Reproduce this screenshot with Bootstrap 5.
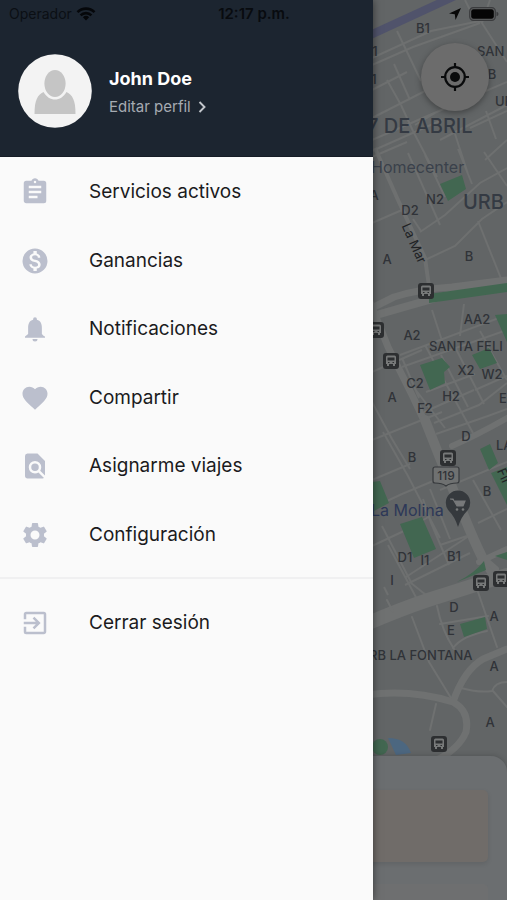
<!DOCTYPE html>
<html lang="es">
<head>
<meta charset="utf-8">
<meta name="viewport" content="width=device-width, initial-scale=1">
<title>Menú</title>
<link href="https://cdn.jsdelivr.net/npm/bootstrap@5.3.0/dist/css/bootstrap.min.css" rel="stylesheet">
<style>
  body { font-family: Inter, "Liberation Sans", sans-serif; background: #626566; }
  .status-strip { height: 28px; padding: 0 8px 0 9px; font-size: 14px; line-height: 28px; color: #080b0f; z-index: 5; }
  .status-strip .side { flex: 1 1 0; }
  .status-strip .carrier { color: #0b0f14; }
  .status-strip .clock { font-size: 15px; }
  .drawer { width: 73.5%; background: #fafafa; z-index: 3; box-shadow: 0 0 8px rgba(0,0,0,.5); }
  .drawer-head { background: #1c2530; padding: 54px 18px 28px; gap: 17px; border-bottom: 1px solid #151c25; }
  .avatar { width: 74px; height: 74px; }
  .user-name { font-size: 18px; line-height: 24px; color: #fff; font-weight: 700; }
  .edit-link { font-size: 15px; line-height: 24px; color: #a6abb2; gap: 6px; }
  .menu-rows { min-height: 411px; }
  .menu-link { color: #1b1b1d; font-size: 19px; line-height: 24px; padding: 2px 20px 0; gap: 39px; min-height: 68px; }
  .menu-link svg { width: 30px; height: 30px; fill: #bbbfcd; }
  .rule { height: 2px; background: #f0f0f1; margin: 9px 0; }
  .map-art text { fill: #303338; font-size: 13px; text-anchor: middle; font-weight: 500; }
  .map-art .from { text-anchor: start; }
  .map-art .district { font-size: 20px; fill: #343a43; }
  .map-art .place { font-size: 16px; font-weight: 400; fill: #3a414b; }
  .map-art .shop { fill: #2d3858; }
  .map-art .street { fill: #202225; font-weight: 400; }
  .map-art .route { font-size: 12px; }
  .locate { top: 43px; right: 18px; width: 68px; height: 68px; background: #6c6c6c; z-index: 2; box-shadow: 0 2px 6px rgba(0,0,0,.35); }
  .locate:hover { background: #727272; }
  .sheet { z-index: 1; background: #6b6e70; border-radius: 16px 16px 0 0; padding: 34px 19px 0; box-shadow: 0 -1px 5px rgba(0,0,0,.15); }
  .trip { height: 72px; background: #706c69; border-radius: 5px; box-shadow: 0 2px 5px rgba(0,0,0,.1); margin-bottom: 22px; }
  .trip-next { height: 16px; background: #6e6f70; border-radius: 5px 5px 0 0; }
</style>
<script src="https://cdn.jsdelivr.net/npm/bootstrap@5.3.0/dist/js/bootstrap.bundle.min.js"></script>
</head>
<body>
<div class="position-relative min-vh-100 overflow-hidden d-flex">

  <div class="status-strip position-absolute top-0 start-0 w-100 d-flex align-items-center">
    <div class="side d-flex align-items-center gap-1">
      <span class="carrier">Operador</span>
      <svg width="20" height="14" viewBox="0 0 20 14" aria-hidden="true"><g fill="none" stroke="#05070a" stroke-width="2.6"><path d="M1.5 5.2a12 12 0 0 1 17 0M4.6 8.4a7.6 7.6 0 0 1 10.8 0"/></g><path fill="#05070a" d="M6.9 10.3a4.5 4.5 0 0 1 6.2 0L10 13.6z"/></svg>
    </div>
    <span class="clock fw-semibold">12:17 p.m.</span>
    <div class="side d-flex align-items-center justify-content-end gap-2">
      <svg width="12" height="12" viewBox="0 0 11 11" aria-hidden="true"><path fill="#080808" d="M11 0 6 11 5.3 5.7 0 5z"/></svg>
      <svg width="30" height="14" viewBox="0 0 30 14" aria-hidden="true"><rect x=".7" y=".7" width="25.6" height="12.6" rx="3.6" fill="#606263" stroke="#3b3c3e" stroke-width="1.2"/><rect x="2.2" y="2.2" width="22.6" height="9.6" rx="2.3" fill="#050505"/><path fill="#3b3c3e" d="M27.500 4.700q2 .6 2 2.300t-2 2.300z"/></svg>
    </div>
  </div>

  <aside class="drawer position-relative min-vh-100">
    <header class="drawer-head d-flex align-items-center">
      <svg class="avatar flex-shrink-0" viewBox="0 0 74 74" role="img" aria-label="Foto de perfil">
        <circle cx="37" cy="37" r="36.800" fill="#f3f3f3"/>
        <path fill="#c5c5c5" d="M16.500 60c0-14 3-19 9-22 3 5 7 7.500 11.500 7.500s8.500-2.500 11.500-7.500c6 3 9 8 9 22z"/>
        <ellipse cx="37" cy="29.500" rx="10.600" ry="13.600" fill="#c5c5c5"/>
      </svg>
      <div class="pt-1">
        <div class="user-name">John Doe</div>
        <a class="edit-link d-flex align-items-center text-decoration-none mt-1" href="#perfil">Editar perfil
          <svg width="10" height="12" viewBox="0 0 10 12" aria-hidden="true"><path d="m2.500 1 5 5-5 5" fill="none" stroke="#c3c7cc" stroke-width="1.900"/></svg>
        </a>
      </div>
    </header>

    <nav aria-label="Menú principal">
      <ul class="menu-rows list-unstyled d-flex flex-column m-0">
        <li class="flex-fill d-flex"><a class="menu-link w-100 d-flex align-items-center text-decoration-none" href="#servicios">
          <svg viewBox="0 0 24 24" aria-hidden="true"><path d="M19 3h-4.180C14.400 1.840 13.300 1 12 1s-2.400.84-2.820 2H5a2 2 0 0 0-2 2v14c0 1.100.9 2 2 2h14a2 2 0 0 0 2-2V5a2 2 0 0 0-2-2m-7 0a1 1 0 1 1 0 2 1 1 0 0 1 0-2m2 14H7v-2h7zm3-4H7v-2h10zm0-4H7V7h10z"/></svg>
          Servicios activos</a></li>
        <li class="flex-fill d-flex"><a class="menu-link w-100 d-flex align-items-center text-decoration-none" href="#ganancias">
          <svg viewBox="0 0 24 24" aria-hidden="true"><path d="M12 2a10 10 0 1 0 0 20 10 10 0 0 0 0-20m1.410 16.090V20h-2.670v-1.930c-1.710-.36-3.160-1.460-3.270-3.400h1.960c.1 1.050.82 1.870 2.650 1.870 1.960 0 2.400-.98 2.400-1.590 0-.83-.44-1.610-2.670-2.140-2.480-.6-4.180-1.620-4.180-3.670 0-1.720 1.390-2.840 3.110-3.210V4h2.670v1.950c1.860.45 2.790 1.860 2.850 3.390H14.300c-.05-1.110-.64-1.870-2.220-1.870-1.500 0-2.400.68-2.400 1.640 0 .84.65 1.390 2.670 1.910s4.180 1.390 4.180 3.910c-.01 1.830-1.380 2.830-3.120 3.160"/></svg>
          Ganancias</a></li>
        <li class="flex-fill d-flex"><a class="menu-link w-100 d-flex align-items-center text-decoration-none" href="#notificaciones">
          <svg viewBox="0 0 24 24" aria-hidden="true"><path d="M12 22a2 2 0 0 0 2-2h-4a2 2 0 0 0 2 2m7-4.500-1.500-1.500v-5c0-3.070-1.140-5.640-4-6.320V4a1.500 1.500 0 0 0-3 0v.68C7.630 5.360 6.500 7.920 6.500 11v5L4 18v1h16v-1z"/></svg>
          Notificaciones</a></li>
        <li class="flex-fill d-flex"><a class="menu-link w-100 d-flex align-items-center text-decoration-none" href="#compartir">
          <svg viewBox="0 0 24 24" aria-hidden="true"><path d="m12 21.350-1.450-1.320C5.400 15.360 2 12.280 2 8.500 2 5.420 4.420 3 7.500 3c1.740 0 3.410.81 4.500 2.090C13.090 3.810 14.760 3 16.500 3 19.580 3 22 5.420 22 8.500c0 3.780-3.400 6.860-8.550 11.540z"/></svg>
          Compartir</a></li>
        <li class="flex-fill d-flex"><a class="menu-link w-100 d-flex align-items-center text-decoration-none" href="#viajes">
          <svg viewBox="0 0 24 24" aria-hidden="true"><path d="M20 19.590V8l-6-6H6a2 2 0 0 0-1.990 2L4 20c0 1.100.89 2 1.990 2H18c.45 0 .85-.15 1.190-.4l-4.430-4.430c-.8.52-1.740.83-2.760.83a5 5 0 1 1 5-5c0 1.020-.31 1.960-.83 2.750zM9 13a3 3 0 1 0 6 0 3 3 0 0 0-6 0"/></svg>
          Asignarme viajes</a></li>
        <li class="flex-fill d-flex"><a class="menu-link w-100 d-flex align-items-center text-decoration-none" href="#configuracion">
          <svg viewBox="0 0 24 24" aria-hidden="true"><path d="M19.140 12.940c.04-.3.060-.61.060-.94s-.02-.64-.07-.94l2.030-1.580a.49.49 0 0 0 .12-.61l-1.920-3.320a.49.49 0 0 0-.59-.22l-2.390.96a7 7 0 0 0-1.620-.94l-.36-2.540a.48.480 0 0 0-.48-.41h-3.840a.47.470 0 0 0-.47.410l-.36 2.540c-.59.240-1.130.570-1.620.940l-2.390-.96a.47.470 0 0 0-.59.220L2.740 8.870c-.12.210-.08.470.12.610l2.030 1.580c-.05.300-.09.630-.09.940s.02.640.07.940l-2.030 1.580a.49.490 0 0 0-.12.610l1.920 3.320c.12.220.37.290.59.220l2.390-.96c.5.380 1.030.700 1.620.940l.36 2.540c.05.240.24.410.48.410h3.840c.24 0 .44-.17.470-.41l.36-2.540c.59-.24 1.130-.56 1.620-.94l2.390.96c.22.080.47 0 .59-.22l1.920-3.320a.47.470 0 0 0-.12-.61zM12 15.600a3.600 3.600 0 1 1 0-7.200 3.600 3.600 0 0 1 0 7.200"/></svg>
          Configuración</a></li>
      </ul>
      <div class="rule"></div>
      <a class="menu-link w-100 d-flex align-items-center text-decoration-none" href="#salir">
        <svg viewBox="0 0 24 24" aria-hidden="true"><path d="M10.090 15.590 11.500 17l5-5-5-5-1.410 1.410L12.670 11H3v2h9.670zM19 3H5a2 2 0 0 0-2 2v4h2V5h14v14H5v-4H3v4a2 2 0 0 0 2 2h14c1.100 0 2-.9 2-2V5a2 2 0 0 0-2-2"/></svg>
        Cerrar sesión</a>
    </nav>
  </aside>

  <svg class="map-art position-absolute top-0 start-0 w-100 h-100" viewBox="0 0 507 900" preserveAspectRatio="xMaxYMin slice" role="img" aria-label="Mapa">
    <defs>
      <g id="bus"><rect x="-8" y="-8" width="16" height="16" rx="3" fill="#2d2f31"/><path fill="#777979" d="M-5-4q0-1.500 1.500-1.500h7Q5-5.500 5-4v7H4v2H2V3h-4v2h-2V3h-1z"/><path fill="#2d2f31" d="M-3.500-3.500h7V-.5h-7zM-3 1h1.500v1H-3zM1.500 1H3v1H1.500z"/></g>
    </defs>
    <rect width="507" height="900" fill="#626566"/>
    <g fill="none" stroke="#6e7070" stroke-width="2">
      <path d="M372 58 431 31 480 21M372 65 413 47 480 23M372 90l35-18M397 31l24 50M387 80l14 25M394 64l16 36M372 118l55-28M372 140l60-26 75-32M415 125l20-12M480 20l27 42M465 0l10 20M490 0l-8 23"/>
      <path d="M372 151l70-31M401 105l12 26 24 46M440 140l67-35M455 134l13 40M470 128l37-17M486 111l10 28M372 157l35-15M408 153l32 72M425 155l20 42M458 149l14 35M372 223l30-13M420 232l25-17 35-32 27-15M485 160l22-20M484 152l23 34M425 260l30-14 27-27 25-17M478 221l24 60M421 231l-8-12"/>
      <path stroke-width="4" d="M375 148l23 52 27 58 4 28"/>
      <path d="M372 372l50-22M400 355l107-40M402 367l105-37M432 310l12 37M464 304l-4 32M402 358l17 40M425 345l8 15 40 73M441 355l27 52M456 349l28 55M480 331l8 14M487 345l20 35M426 392l49-18M424 412l50-22M475 390l32-14M415 389l30 39M434 423l45-18 28-22M436 434l52-18 19-7M372 440l70-28M372 402l20 37 18 30"/>
      <path d="M372 480l38-16M383 432l25 44 32 62M372 508l30-14 48-20M440 490l67-28M430 489l20 50M473 480l28 50M372 546l34-16 24-14M382 526l30 58M423 499l8 24 18 42M406 577l40-26 26-17M440 545l27-9M388 545l30 56M405 585l65-32M478 523l29-14M388 595l-4-8M411 583l15 12"/>
    </g>
    <g fill="none" stroke="#6f7171" stroke-linecap="round" stroke-linejoin="round">
      <path stroke-width="8" d="M366 318q45-13 88-25l53-6"/>
      <path stroke-width="7" d="M366 311l28-14q25-8 58-10l55-7M368 297l20 50 25 50 28 60"/>
      <path stroke-width="10" d="M425 420l15 38 24 58q10 25 19 43l14 20"/>
      <path stroke-width="14" d="M366 624q35-15 62-24l79-25"/>
      <path stroke-width="6" d="M452 446q25-11 55-28M480 555l16 14M479 562l28-13"/>
      <path stroke-width="7" d="M366 695q45-6 87 7 11-32 30-43l24-10M453 702q17 9 13 30-7 17-31 29"/>
      <path stroke-width="2" d="M387 600l6 12M412 617l17 45 22 36M437 606q5 25 17 43M440 624l48-8M478 592l19 55M453 648q9-12 34-17M461 688q18 5 31 3 3-9 15-9M493 691l14 16M436 704l-6 26"/>
    </g>
    <path d="M366 37 455-4" stroke="#50536b" stroke-width="8" fill="none"/>
    <g fill="#426751">
      <path d="M440 184l22-9 4 14-18 12zM429 294l78-11v9l-78 11zM420 365l22-7 8 9-6 5 1 11-15 7zM472 355l17-7 8 15-17 6zM495 315l12-1v28zM400 524l22-7 14 32-22 9zM372 482l8-1 9 22-17 9zM480 449l10-5 8 19-9 7zM491 473l16-6v38zM457 582q18-9 27-21l2 9zM460 624l25-7 2 12-23 8zM495 556l12-4v8z"/>
      <circle cx="380" cy="747" r="8"/>
    </g>
    <path fill="#4c6780" d="M388 738q18 0 23 15l-15 2z"/>
    <g>
      <text x="423" y="33">B1</text><text x="375" y="56">1</text><text x="374" y="84">1</text>
      <text class="from" x="477" y="56">SAN</text><text x="492" y="79">B</text><text class="from" x="495" y="106">UR</text>
      <text class="from district" x="367" y="133">7 DE ABRIL</text>
      <text class="from place" x="371" y="173">Homecenter</text>
      <text x="435" y="204">N2</text><text x="410" y="215">D2</text>
      <text class="from district" x="463" y="209">URB</text>
      <text x="374" y="200">A</text><text x="387" y="264">A</text><text x="469" y="261">B</text>
      <text class="street" transform="translate(410 245) rotate(66)">La Mar</text>
      <text x="412" y="340">A2</text><text x="477" y="324">AA2</text><text class="from" x="429" y="351">SANTA FELI</text>
      <text x="466" y="375">X2</text><text x="492" y="379">W2</text><text x="415" y="388">C2</text><text x="392" y="402">A</text><text x="451" y="401">H2</text><text x="425" y="413">F2</text><text x="503" y="403">E</text><text x="466" y="441">D</text><text class="from" x="496" y="450">LA</text>
      <text x="412" y="462">B</text><text x="487" y="496">B</text>
      <text class="from place shop" x="371" y="516">La Molina</text>
      <text class="street" transform="translate(500 478) rotate(66)">Fir</text>
      <text x="405" y="562">D1</text><text x="425" y="565">I1</text><text x="454" y="561">B1</text><text x="392" y="585">I</text><text x="454" y="612">D</text><text x="494" y="621">A</text><text x="451" y="635">E</text>
      <text class="from" x="369" y="660">RB LA FONTANA</text>
      <text x="494" y="671">A</text><text x="490" y="727">A</text>
    </g>
    <path d="M435 467h22q2 0 2 2v12q0 2-2 2-7 0-11 3-4-3-11-3-2 0-2-2v-12q0-2 2-2z" fill="#6f7171" stroke="#36393c" stroke-width="1.200"/>
    <text class="route" x="446" y="480">119</text>
    <path fill="#35393d" d="M458 527q-3-10-9-16a12.200 12.200 0 1 1 18 0q-6 6-9 16z"/>
    <path d="M450 499h3l4 7h6l2-5h-10" fill="#77797a" stroke="#77797a" stroke-width="1.200"/><circle cx="457" cy="509.500" r="1.300" fill="#77797a"/><circle cx="463" cy="509.500" r="1.300" fill="#77797a"/>
    <use href="#bus" x="426" y="291"/><use href="#bus" x="376" y="330"/><use href="#bus" x="391" y="361"/><use href="#bus" x="448" y="458"/><use href="#bus" x="481" y="583"/><use href="#bus" x="501" y="579"/><use href="#bus" x="439" y="744"/>
  </svg>

  <button type="button" class="locate btn rounded-circle position-absolute border-0 p-0 d-flex align-items-center justify-content-center" aria-label="Mi ubicación">
    <svg width="28" height="28" viewBox="0 0 28 28" aria-hidden="true"><g fill="none" stroke="#0a0b0c" stroke-width="2.200"><circle cx="14" cy="14" r="9.800"/><path d="M14 0v5M14 23v5M0 14h5M23 14h5"/></g><circle cx="14" cy="14" r="5" fill="#0a0b0c"/></svg>
  </button>

  <div class="sheet position-absolute bottom-0 start-0 w-100">
    <div class="trip"></div>
    <div class="trip-next"></div>
  </div>
</div>
</body>
</html>
